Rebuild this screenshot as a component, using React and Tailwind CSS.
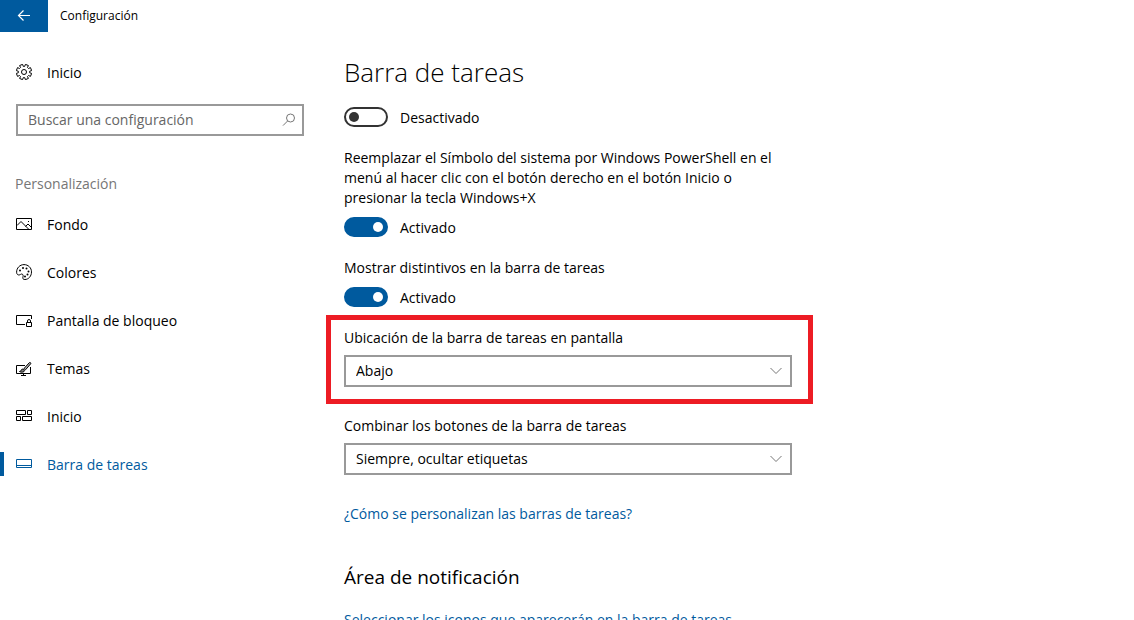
import React, { useState } from "react";
import clsx from "clsx";

function Icon({ children, className }) {
    return (
        <svg viewBox="0 0 16 16" fill="none" stroke="currentColor" strokeWidth="1" aria-hidden="true" className={clsx("w-4 h-4 shrink-0", className)}>
            {children}
        </svg>
    );
}

// Eight teeth, four corners each
const gearPoints = Array.from({ length: 8 }, (_, i) => {
    const corner = (radius, offset) => {
        const angle = ((i * 45 + 22.5 + offset) * Math.PI) / 180;
        return `${(8 + radius * Math.cos(angle)).toFixed(2)},${(8 + radius * Math.sin(angle)).toFixed(2)}`;
    };
    return [corner(5.7, -15), corner(7.8, -12), corner(7.8, 12), corner(5.7, 15)].join(" ");
}).join(" ");

const GearIcon = () => (
    <Icon>
        <polygon points={gearPoints} strokeLinejoin="round" />
        <circle cx="8" cy="8" r="2.5" />
    </Icon>
);

const PictureIcon = () => (
    <Icon>
        <path d="M.5 2.5h15v11H.5z" />
        <path d="M1 9.5l4-4 7.5 7.5M9.5 10.5L12 8l3.500 3.500" />
        <path d="M12 5.5h1" />
    </Icon>
);

const PaletteIcon = () => (
    <Icon>
        <path d="M.6 8.2C.6 4 3.8.6 8 .6s7.5 3.2 7.5 7.3c0 4.3-3 7.6-6.6 7.6-2 0-2.3-1.1-2-2.3.3-1.3.6-2.6-.8-3.1-.9-.3-1.4.3-2.3.7C2.2 11.4.6 10.5.6 8.200z" />
        <g fill="currentColor" stroke="none">
            <circle cx="4" cy="6.5" r="1" />
            <circle cx="7" cy="4" r="1" />
            <circle cx="10.5" cy="4.5" r="1" />
            <circle cx="12.5" cy="7.5" r="1" />
            <circle cx="11.5" cy="10.5" r="1" />
            <circle cx="9" cy="12.5" r="1" />
        </g>
    </Icon>
);

const LockScreenIcon = () => (
    <Icon>
        <path d="M9 12.5H.5v-9h15V7" />
        <path d="M10.5 10.5h5v4h-5zM11.5 10.5V9a1.5 1.5 0 0 1 3 0v1.5" />
    </Icon>
);

const ThemesIcon = () => (
    <Icon>
        <path d="M9 5.5H.5v8h14V7M5 15.5h5M7.5 14v1.5" />
        <path d="M8 8.500L13.300 2.700c.8-.8 2 .3 1.300 1.200L9.500 9.800z" fill="currentColor" fillOpacity="0.3" />
        <path d="M3.500 11.500c1.200 0 1.300-.7 1.700-1.500C5.700 9 7 8.800 7.900 9.500c.9.800.5 2.300-.8 2.500-1.300.3-2.500.2-3.600-.5z" fill="currentColor" fillOpacity="0.5" />
    </Icon>
);

const TilesIcon = () => (
    <Icon>
        <path d="M.5 2.5h9v4h-9zM11.5 2.5h4v4h-4zM.5 8.5h4v4h-4zM6.5 8.5h9v4h-9z" />
    </Icon>
);

const TaskbarIcon = () => (
    <Icon>
        <path d="M.5 3.5h15v8H.5zM.5 9.5h15" />
    </Icon>
);

const navItems = [
    { id: "fondo", label: "Fondo", icon: PictureIcon },
    { id: "colores", label: "Colores", icon: PaletteIcon },
    { id: "bloqueo", label: "Pantalla de bloqueo", icon: LockScreenIcon },
    { id: "temas", label: "Temas", icon: ThemesIcon },
    { id: "inicio", label: "Inicio", icon: TilesIcon },
    { id: "barra", label: "Barra de tareas", icon: TaskbarIcon },
];

function NavLink({ label, icon: ItemIcon, active, onClick }) {
    return (
        <a
            href="#"
            onClick={onClick}
            aria-current={active ? "page" : undefined}
            className={clsx("flex items-center h-12 hover:bg-gray-100", active ? "text-[#005a9e]" : "text-black")}
        >
            <span className={clsx("w-1 h-6 mr-3", active && "bg-[#005a9e]")} />
            <ItemIcon />
            <span className="ml-[15px] pt-0.5">{label}</span>
        </a>
    );
}

function Toggle({ label, defaultChecked = false }) {
    const [checked, setChecked] = useState(defaultChecked);

    return (
        <label className="flex items-center gap-3 h-5 w-fit">
            <input
                type="checkbox"
                role="switch"
                aria-label={label}
                checked={checked}
                onChange={(e) => setChecked(e.target.checked)}
                className="appearance-none flex items-center w-11 h-5 px-[3px] rounded-full border-2 border-[#333333] checked:border-[#005a9e] checked:bg-[#005a9e] checked:justify-end before:w-2.5 before:h-2.5 before:rounded-full before:bg-[#333333] checked:before:bg-white"
            />
            <span className="pt-0.5">{checked ? "Activado" : "Desactivado"}</span>
        </label>
    );
}

function SelectField({ id, label, options }) {
    return (
        <div>
            <label htmlFor={id} className="block">{label}</label>
            <div className="relative mt-[7px]">
                <select id={id} className="appearance-none block w-full h-8 pl-2.5 pr-8 bg-white border-2 border-[#999999]">
                    {options.map((option) => (
                        <option key={option}>{option}</option>
                    ))}
                </select>
                <svg viewBox="0 0 12 8" fill="none" stroke="#767676" aria-hidden="true" className="absolute right-2.5 top-3 w-3 h-2 pointer-events-none">
                    <path d="M.5 1L6 6.5 11.5 1" />
                </svg>
            </div>
        </div>
    );
}

export default function App() {
    const [page, setPage] = useState("barra");

    return (
        <div className="h-screen flex flex-col overflow-hidden bg-white text-black text-[14px] leading-5 font-['Segoe_UI','Open_Sans',sans-serif]">

            {/* Title bar */}
            <header className="flex items-center h-8 shrink-0">
                <button aria-label="Atrás" className="flex items-center justify-center w-12 h-8 bg-[#005a9e] text-white">
                    <Icon>
                        <path d="M14 7.5H2.5M7.5 2.5l-5 5 5 5" strokeWidth="1.2" />
                    </Icon>
                </button>
                <span className="ml-3 text-[12px]">Configuración</span>
            </header>

            <div className="flex flex-1 min-h-0">

                {/* Sidebar */}
                <aside className="w-80 shrink-0 pt-4">
                    <NavLink label="Inicio" icon={GearIcon} />

                    <div className="relative mx-4 mt-2">
                        <input
                            type="text"
                            aria-label="Buscar una configuración"
                            placeholder="Buscar una configuración"
                            className="block w-full h-8 pl-2.5 pr-8 pb-0.5 border-2 border-[#999999] placeholder:text-[#666666]"
                        />
                        <svg viewBox="0 0 14 14" fill="none" stroke="#767676" aria-hidden="true" className="absolute right-2 top-[9px] w-3.5 h-3.5">
                            <circle cx="8.5" cy="5" r="4" />
                            <path d="M5.7 7.9L1 12.6" />
                        </svg>
                    </div>

                    <h2 className="mt-8 h-8 px-[15px] flex items-center text-[#767676]">Personalización</h2>

                    <nav>
                        {navItems.map((item) => (
                            <NavLink
                                key={item.id}
                                label={item.label}
                                icon={item.icon}
                                active={page === item.id}
                                onClick={() => setPage(item.id)}
                            />
                        ))}
                    </nav>
                </aside>

                {/* Content */}
                <main className="flex-1 min-w-0 overflow-hidden pt-5 px-6">
                    <div className="max-w-md">
                        <h1 className="text-[26px] leading-10 font-light">Barra de tareas</h1>

                        <div className="mt-[15px]">
                            <Toggle label="Barra de tareas" />
                        </div>

                        <section className="mt-[21px] space-y-[9px]">
                            <p>
                                Reemplazar el Símbolo del sistema por Windows PowerShell en el menú al hacer clic con el botón derecho en el botón Inicio o presionar la tecla Windows+X
                            </p>
                            <Toggle label="Reemplazar el Símbolo del sistema por Windows PowerShell" defaultChecked />
                        </section>

                        <section className="mt-[21px] space-y-[9px]">
                            <p>Mostrar distintivos en la barra de tareas</p>
                            <Toggle label="Mostrar distintivos en la barra de tareas" defaultChecked />
                        </section>

                        <div className="relative mt-[21px]">
                            <SelectField
                                id="ubicacion"
                                label="Ubicación de la barra de tareas en pantalla"
                                options={["Abajo", "Arriba", "Izquierda", "Derecha"]}
                            />
                            {/* Highlight frame */}
                            <div className="absolute -left-[18px] -right-[21px] -top-[13px] -bottom-[17px] border-5 border-[#ed1c24] pointer-events-none" />
                        </div>

                        <div className="mt-[29px]">
                            <SelectField
                                id="combinar"
                                label="Combinar los botones de la barra de tareas"
                                options={["Siempre, ocultar etiquetas", "Si la barra de tareas está llena", "Nunca"]}
                            />
                        </div>

                        <a href="#" className="block w-fit mt-[29px] text-[#005a9e]">¿Cómo se personalizan las barras de tareas?</a>

                        <h2 className="mt-[41px] text-[19px] leading-6">Área de notificación</h2>
                        <a href="#" className="block w-fit mt-[21px] text-[#005a9e]">Seleccionar los iconos que aparecerán en la barra de tareas</a>
                    </div>
                </main>
            </div>
        </div>
    );
}
